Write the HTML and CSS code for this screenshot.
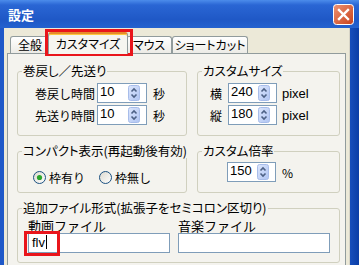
FILE: index.html
```html
<!DOCTYPE html>
<html lang="ja">
<head>
  <meta charset="UTF-8">
  <title>設定</title>
  <link rel="stylesheet" href="styles.css">
</head>
<body>

<div class="window">
  <div class="titlebar">
    <span class="title">設定</span>
    <span class="close">
      <svg width="21" height="21" viewBox="0 0 21 21">
        <defs>
          <linearGradient id="cg" x1="0" y1="0" x2="1" y2="1">
            <stop offset="0" stop-color="#EE9474"/>
            <stop offset="1" stop-color="#C8401A"/>
          </linearGradient>
        </defs>
        <rect x="0.5" y="0.5" width="20" height="20" rx="3" fill="url(#cg)" stroke="#fff"/>
        <path d="M6 6 L15 15 M15 6 L6 15" stroke="#fff" stroke-width="2.4" stroke-linecap="square"/>
      </svg>
    </span>
  </div>

  <div class="client">
    <div class="tabs">
      <div class="tab tab-general">全般</div>
      <div class="tab tab-active">カスタマイズ</div>
      <div class="tab tab-mouse">マウス</div>
      <div class="tab tab-shortcut">ショートカット</div>
    </div>

    <div class="panel">
      <div class="group-row">
        <div class="group group-rewind">
          <div class="group-title">巻戻し／先送り</div>
          <div class="field field-first">
            <span class="lbl lbl-time">巻戻し時間</span>
            <div class="spin-box box-time"><span class="val">10</span><svg class="spin" width="12" height="16" viewBox="0 0 12 16"><use href="#spinbtn"/></svg></div>
            <span class="unit">秒</span>
          </div>
          <div class="field">
            <span class="lbl lbl-time">先送り時間</span>
            <div class="spin-box box-time"><span class="val">10</span><svg class="spin" width="12" height="16" viewBox="0 0 12 16"><use href="#spinbtn"/></svg></div>
            <span class="unit">秒</span>
          </div>
        </div>

        <div class="group group-size">
          <div class="group-title">カスタムサイズ</div>
          <div class="field field-first">
            <span class="lbl lbl-axis">横</span>
            <div class="spin-box box-size"><span class="val">240</span><svg class="spin" width="12" height="16" viewBox="0 0 12 16"><use href="#spinbtn"/></svg></div>
            <span class="unit unit-px">pixel</span>
          </div>
          <div class="field">
            <span class="lbl lbl-axis">縦</span>
            <div class="spin-box box-size"><span class="val">180</span><svg class="spin" width="12" height="16" viewBox="0 0 12 16"><use href="#spinbtn"/></svg></div>
            <span class="unit unit-px">pixel</span>
          </div>
        </div>
      </div>

      <div class="group-row row-second">
        <div class="group group-compact">
          <div class="group-title">コンパクト表示(再起動後有効)</div>
          <div class="radios">
            <span class="radio">
              <svg width="13" height="13" viewBox="0 0 13 13"><use href="#radiobase"/><circle cx="6.5" cy="6.5" r="2.6" fill="#2BA52B"/></svg>
              枠有り
            </span>
            <span class="radio">
              <svg width="13" height="13" viewBox="0 0 13 13"><use href="#radiobase"/></svg>
              枠無し
            </span>
          </div>
        </div>

        <div class="group group-zoom">
          <div class="group-title">カスタム倍率</div>
          <div class="field field-zoom">
            <div class="spin-box box-size"><span class="val">150</span><svg class="spin" width="12" height="16" viewBox="0 0 12 16"><use href="#spinbtn"/></svg></div>
            <span class="unit unit-pct">%</span>
          </div>
        </div>
      </div>

      <div class="group group-files">
        <div class="group-title">追加ファイル形式(拡張子をセミコロン区切り)</div>
        <div class="file-cols">
          <div class="file-col col-video">
            <span class="file-lbl">動画ファイル</span>
            <div class="text-box">flv<span class="caret"></span></div>
          </div>
          <div class="file-col col-music">
            <span class="file-lbl">音楽ファイル</span>
            <div class="text-box"></div>
          </div>
        </div>
      </div>
    </div>
  </div>

  <div class="mark mark-tab"></div>
  <div class="mark mark-flv"></div>
</div>

<svg class="defs" width="0" height="0">
  <defs>
    <linearGradient id="sg" x1="0" y1="0" x2="1" y2="1">
      <stop offset="0" stop-color="#DCE6FC"/>
      <stop offset="1" stop-color="#AFC4F2"/>
    </linearGradient>
    <linearGradient id="rg" x1="0" y1="0" x2="1" y2="1">
      <stop offset="0" stop-color="#DCD9CE"/>
      <stop offset="1" stop-color="#FFFFFF"/>
    </linearGradient>
    <g id="spinbtn">
      <rect x="0.5" y="0.5" width="11" height="15" rx="2" fill="url(#sg)" stroke="#A8BDEA"/>
      <path d="M3.5 6.5 L6 4 L8.5 6.5 M3.5 9.5 L6 12 L8.5 9.5" fill="none" stroke="#4D6185" stroke-width="1.6"/>
    </g>
    <g id="radiobase">
      <circle cx="6.5" cy="6.5" r="6" fill="url(#rg)" stroke="#1C5180"/>
    </g>
  </defs>
</svg>

</body>
</html>
```

FILE: styles.css
```css
body {
  margin: 0;
  font-family: "Noto Sans CJK JP", sans-serif;
  font-size: 12px;
  color: #000;
}
.defs {
  display: block;
  position: absolute;
}
.window {
  position: relative;
  width: 359px;
  height: 265px;
  overflow: hidden;
  display: flex;
  flex-direction: column;
  background: linear-gradient(to right, #1E58C8 0, #1E58C8 96%, #0B3EA6 100%);
}
.titlebar {
  height: 28px;
  flex: none;
  display: flex;
  align-items: center;
  justify-content: space-between;
  padding: 1px 5px 0 8px;
  box-sizing: border-box;
  background: linear-gradient(#4C8CEB 0, #2A66D4 5px, #1F58C6 70%, #2462CF 100%);
}
.title {
  color: #fff;
  font-weight: bold;
  font-size: 13px;
}
.close {
  display: flex;
}
.client {
  flex: 1;
  margin: 0 9px 0 4px;
  padding-top: 4px;
  background: #ECE9D8;
  border-right: 1px solid #D6D3C6;
}

/* tabs */
.tabs {
  display: flex;
  align-items: flex-end;
  height: 21px;
  padding-left: 6px;
}
.tab {
  height: 17px;
  box-sizing: border-box;
  border: 1px solid #919B9C;
  border-bottom: none;
  border-radius: 3px 3px 0 0;
  background: linear-gradient(#FFFFFF, #ECEBE6);
  text-align: center;
  line-height: 15px;
  white-space: nowrap;
  font-feature-settings: "palt";
}
.tab-general { width: 40px; }
.tab-mouse { width: 46px; }
.tab-shortcut { width: 76px; }
.tab-active {
  width: 80px;
  height: 22px;
  margin: 0 -2px -1px;
  position: relative;
  z-index: 1;
  background: #F6F5F0;
  border-top: 2px solid #E68B2C;
  box-shadow: inset 0 1px #FFC83C;
  line-height: 19px;
}

/* panel */
.panel {
  margin: 0 3px;
  height: 100%;
  border: 1px solid #919B9C;
  background: #F4F3EE;
  padding: 17px 0 0 9px;
}
.group-row {
  display: flex;
  gap: 10px;
}
.row-second {
  margin-top: 15px;
}
.group {
  border: 1px solid #D0D0BF;
  border-radius: 3px;
  box-sizing: border-box;
}
.group-title {
  width: fit-content;
  margin: -8px 0 0 4px;
  padding: 0 1px;
  height: 14px;
  line-height: 14px;
  background: #F4F3EE;
  white-space: nowrap;
  font-feature-settings: "palt";
  font-size: 12.5px;
}
.group-rewind { width: 170px; height: 65px; }
.group-size { width: 143px; height: 65px; }
.group-compact { width: 170px; height: 42px; }
.group-zoom { width: 143px; height: 42px; }
.group-files {
  width: 323px;
  height: 55px;
  margin-top: 15px;
}

.field {
  display: flex;
  align-items: center;
  height: 20px;
  margin-top: 2px;
}
.field-first { margin-top: 5px; }
.group-rewind .field { padding-left: 17px; }
.group-size .field { padding-left: 12px; }
.field-zoom {
  margin-top: 4px;
  padding-left: 29px;
}
.lbl-time { width: 62px; }
.lbl-axis { width: 18px; }

.spin-box {
  height: 20px;
  box-sizing: border-box;
  border: 1px solid #7F9DB9;
  background: #fff;
  display: flex;
  align-items: center;
  justify-content: space-between;
  padding: 0 6px 0 2px;
}
.box-time { width: 50px; }
.box-size { width: 49px; }
.val {
  font-family: "Liberation Sans", sans-serif;
  font-size: 13px;
  line-height: 13px;
  align-self: flex-start;
  margin-top: 1px;
}
.unit { margin-left: 6px; }
.unit-px {
  margin-left: 5px;
  font-family: "Liberation Sans", sans-serif;
  font-size: 13px;
}

.radios {
  display: flex;
  height: 20px;
  align-items: center;
  margin-top: 9px;
  padding-left: 15px;
  gap: 14px;
}
.radio {
  display: flex;
  align-items: center;
  gap: 3px;
}

.file-cols {
  display: flex;
  gap: 8px;
  padding-left: 10px;
  margin-top: 4px;
}
.file-col {
  display: flex;
  flex-direction: column;
}
.col-video { width: 142px; }
.col-music { width: 152px; }
.file-lbl {
  line-height: 14px;
  font-size: 13px;
}
.text-box {
  height: 20px;
  box-sizing: border-box;
  border: 1px solid #7F9DB9;
  background: #fff;
  padding: 1px 0 0 3px;
  font-family: "Liberation Sans", sans-serif;
  font-size: 13px;
  line-height: 15px;
  display: flex;
  align-items: flex-start;
}
.caret {
  width: 0;
  height: 14px;
  border-left: 1px solid #000;
  margin-left: 1px;
}

/* red annotation frames */
.mark {
  position: absolute;
  box-sizing: border-box;
  border: 3px solid #E9151B;
}
.mark-tab {
  left: 45px;
  top: 29px;
  width: 88px;
  height: 27px;
}
.mark-flv {
  left: 24px;
  top: 231px;
  width: 36px;
  height: 25px;
}
```
